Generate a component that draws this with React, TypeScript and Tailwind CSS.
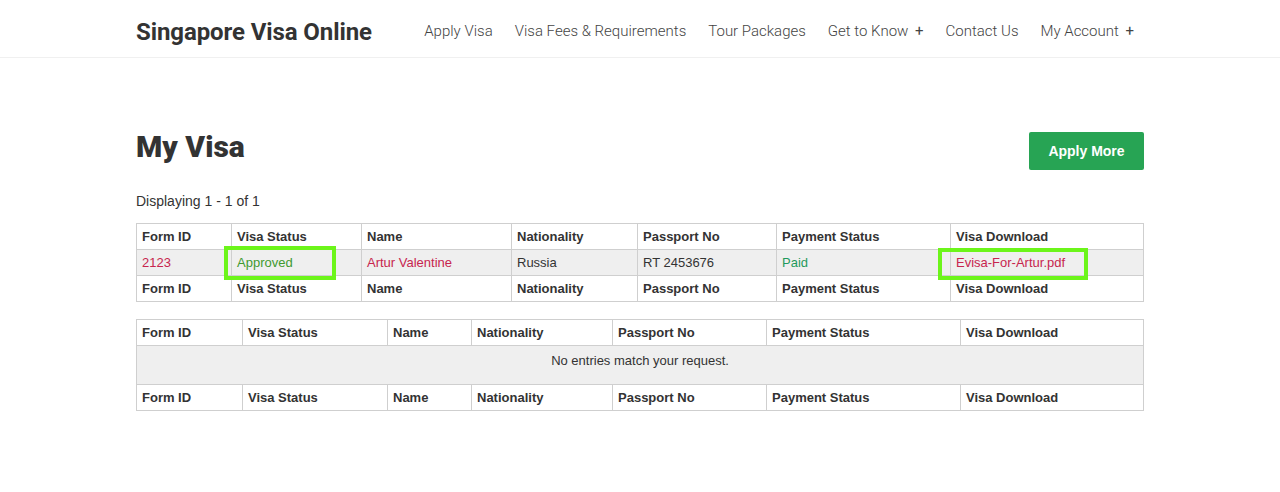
import React from "react";

const font = { fontFamily: '"Helvetica Neue", "Liberation Sans", Arial, sans-serif' };

const cols1 = ["Form ID", "Visa Status", "Name", "Nationality", "Passport No", "Payment Status", "Visa Download"];
const w1 = [95, 130, 150, 126, 139, 174, 193];
const w2 = [106, 145, 84, 141, 154, 194, 183];

function HeadRow({ widths }: { widths: number[] }) {
  return (
    <tr className="h-[26px]">
      {cols1.map((c, i) => (
        <th
          key={c}
          style={{ width: widths[i] }}
          className="border border-[#cfcfcf] px-[5px] text-left text-[13px] font-bold text-[#333] align-middle"
        >
          {c}
        </th>
      ))}
    </tr>
  );
}

export default function App() {
  return (
    <div className="min-h-[492px] bg-white text-[#333]" style={font}>
      <header className="h-[58px] border-b border-[#f0f0f0]">
        <div className="mx-auto flex h-full w-[1008px] items-center justify-between pt-[6px]">
          <div
            className="text-[24px] font-bold tracking-[-0.1px] text-[#333]"
            style={{ fontFamily: 'Roboto, "Noto Sans", sans-serif', fontWeight: 700 }}
          >
            Singapore Visa Online
          </div>
          <nav
            className="flex items-center gap-[22px] pr-[10px] text-[15px] font-light text-[#444]"
            style={{ fontFamily: 'Roboto, "Noto Sans", sans-serif', fontWeight: 300 }}
          >
            <span>Apply Visa</span>
            <span>Visa Fees &amp; Requirements</span>
            <span>Tour Packages</span>
            <span>
              Get to Know <span className="ml-[3px] font-normal">+</span>
            </span>
            <span>Contact Us</span>
            <span>
              My Account <span className="ml-[3px] font-normal">+</span>
            </span>
          </nav>
        </div>
      </header>

      <main className="mx-auto w-[1008px] pt-[74px]">
        <div className="flex items-start justify-between">
          <h1
            className="text-[30px] leading-[30px] font-black text-[#333]"
            style={{ fontFamily: 'Roboto, "Noto Sans", sans-serif', fontWeight: 900 }}
          >
            My Visa
          </h1>
          <button className="h-[38px] w-[115px] rounded-[2px] bg-[#27a454] text-[14px] font-bold text-white">
            Apply More
          </button>
        </div>
        <div className="mt-[21px] text-[14px] text-[#333]">Displaying 1 - 1 of 1</div>

        <table className="mt-[11px] w-[1008px] table-fixed border-collapse text-[13px]">
          <thead>
            <HeadRow widths={w1} />
          </thead>
          <tbody>
            <tr className="h-[26px] bg-[#efefef]">
              <td className="border border-[#cfcfcf] px-[5px] text-[#c7254e]">2123</td>
              <td className="relative border border-[#cfcfcf] px-[5px] text-[#3f9a2f]">
                Approved
                <span className="pointer-events-none absolute left-[-8px] top-[-4px] h-[34px] w-[112px] border-[4px] border-[#6cf51a]" />
              </td>
              <td className="border border-[#cfcfcf] px-[5px] text-[#c7254e]">Artur Valentine</td>
              <td className="border border-[#cfcfcf] px-[5px] text-[#333]">Russia</td>
              <td className="border border-[#cfcfcf] px-[5px] text-[#333]">RT 2453676</td>
              <td className="border border-[#cfcfcf] px-[5px] text-[#1f9a5c]">Paid</td>
              <td className="relative border border-[#cfcfcf] px-[5px] text-[#c7254e]">
                Evisa-For-Artur.pdf
                <span className="pointer-events-none absolute left-[-13px] top-[-2px] h-[32px] w-[150px] border-[4px] border-[#6cf51a]" />
              </td>
            </tr>
          </tbody>
          <tfoot>
            <HeadRow widths={w1} />
          </tfoot>
        </table>

        <table className="mt-[17px] w-[1008px] table-fixed border-collapse text-[13px]">
          <thead>
            <HeadRow widths={w2} />
          </thead>
          <tbody>
            <tr className="h-[39px] bg-[#efefef]">
              <td colSpan={7} className="border border-[#cfcfcf] px-[5px] pb-[13px] pt-[5px] text-center align-top text-[#333]">
                No entries match your request.
              </td>
            </tr>
          </tbody>
          <tfoot>
            <HeadRow widths={w2} />
          </tfoot>
        </table>
      </main>
    </div>
  );
}
